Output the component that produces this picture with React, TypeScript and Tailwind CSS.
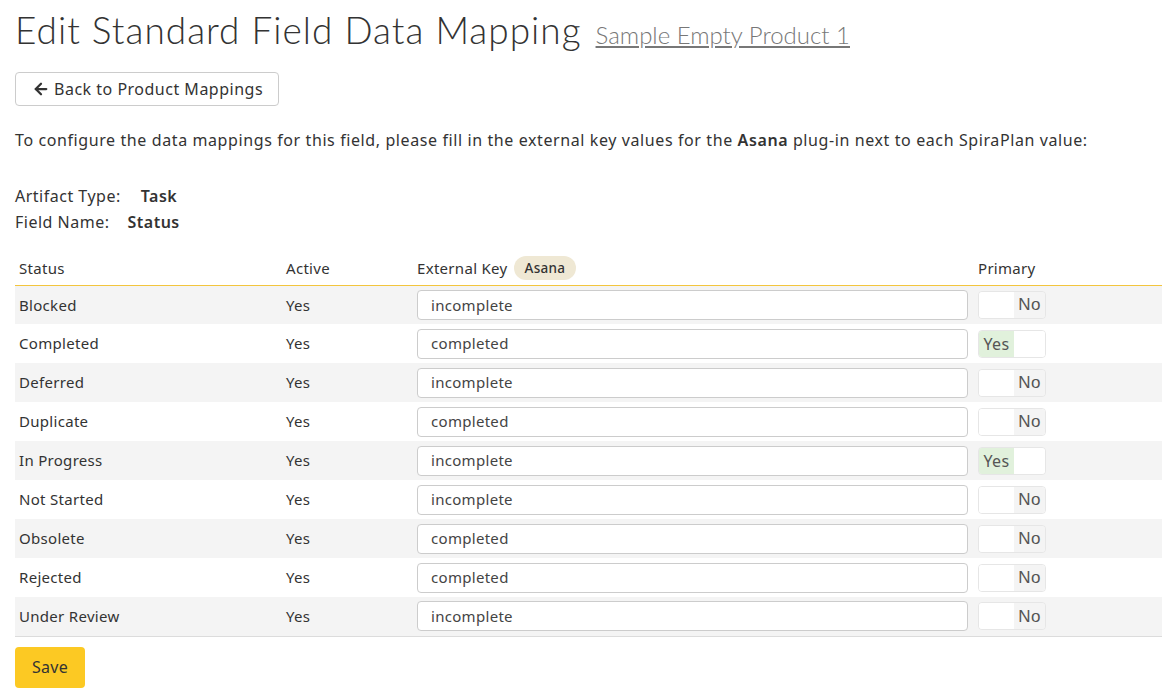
import { ArrowLeft } from "lucide-react";

const rows = [
  { name: "Blocked", key: "incomplete", primary: false },
  { name: "Completed", key: "completed", primary: true },
  { name: "Deferred", key: "incomplete", primary: false },
  { name: "Duplicate", key: "completed", primary: false },
  { name: "In Progress", key: "incomplete", primary: true },
  { name: "Not Started", key: "incomplete", primary: false },
  { name: "Obsolete", key: "completed", primary: false },
  { name: "Rejected", key: "completed", primary: false },
  { name: "Under Review", key: "incomplete", primary: false },
];

function Toggle({ on }: { on: boolean }) {
  return (
    <div className="flex h-[28px] w-[68px] overflow-hidden rounded-[4px] border border-[#e6e6e6] text-[16px] leading-none">
      {on ? (
        <>
          <span className="flex w-[35px] items-center justify-center bg-[#e1f1dc] text-[#555]">Yes</span>
          <span className="flex-1 bg-white" />
        </>
      ) : (
        <>
          <span className="w-[35px] bg-white" />
          <span className="flex flex-1 items-center justify-center bg-[#f4f4f4] font-['Liberation_Sans',sans-serif] text-[17px] text-[#555]">No</span>
        </>
      )}
    </div>
  );
}

export default function App() {
  return (
    <div className="min-h-screen bg-white px-[15px] font-['Noto_Sans',sans-serif] text-[15px] text-[#333]">
      <h1 className="flex items-baseline gap-[14px] pt-[8px] font-['Lato',sans-serif] text-[37px] font-light leading-[44px] tracking-[1px] text-[#333]">
        Edit Standard Field Data Mapping
        <a href="#" className="text-[24px] tracking-normal text-[#777] underline">Sample Empty Product 1</a>
      </h1>

      <button className="mt-[15px] flex h-[34px] items-center gap-[4px] rounded-[4px] border border-[#ccc] bg-white pl-[16px] pr-[15px] text-[16px] tracking-[0.5px] text-[#333]">
        <ArrowLeft size={18} strokeWidth={3} />
        Back to Product Mappings
      </button>

      <p className="mt-[22px] text-[16px] leading-[24px] tracking-[0.6px]">
        To configure the data mappings for this field, please fill in the external key values for the{" "}
        <b className="font-semibold">Asana</b> plug-in next to each SpiraPlan value:
      </p>

      <div className="mt-[32px] flex flex-col gap-[2px] text-[16px] leading-[24px] tracking-[0.5px]">
        <div className="flex gap-[20px]">
          <span>Artifact Type:</span>
          <b className="font-semibold">Task</b>
        </div>
        <div className="flex gap-[18px]">
          <span>Field Name:</span>
          <b className="font-semibold">Status</b>
        </div>
      </div>

      <table className="mt-[17px] w-[1147px] border-collapse text-[15px] tracking-[0.3px]">
        <thead>
          <tr className="h-[34px] text-left">
            <th className="w-[267px] border-b border-[#f3c53e] pl-[4px] font-normal">Status</th>
            <th className="w-[132px] border-b border-[#f3c53e] pl-[4px] font-normal">Active</th>
            <th className="w-[560px] border-b border-[#f3c53e] pl-[3px] font-normal">
              <span className="inline-flex items-center gap-[6px]">
                External Key
                <span className="rounded-full bg-[#efe8d4] px-[11px] py-[2px] text-[13.5px] font-medium">Asana</span>
              </span>
            </th>
            <th className="border-b border-[#f3c53e] pl-[4px] font-normal">Primary</th>
          </tr>
        </thead>
        <tbody>
          {rows.map((r, i) => (
            <tr
              key={r.name}
              className={`h-[39px] ${i % 2 === 0 ? "bg-[#f4f4f4]" : "bg-white"} ${i === rows.length - 1 ? "border-b border-[#dcdcdc]" : ""}`}
            >
              <td className="pl-[4px]">{r.name}</td>
              <td className="pl-[4px]">Yes</td>
              <td className="pl-[3px]">
                <div className="flex h-[30px] w-[551px] items-center rounded-[4px] border border-[#ccc] bg-white px-[13px] text-[#444]">
                  {r.key}
                </div>
              </td>
              <td className="pl-[4px]">
                <Toggle on={r.primary} />
              </td>
            </tr>
          ))}
        </tbody>
      </table>

      <button className="mt-[10px] h-[41px] rounded-[4px] bg-[#fcc923] px-[17px] text-[16px] tracking-[0.3px] text-[#333]">
        Save
      </button>
    </div>
  );
}
